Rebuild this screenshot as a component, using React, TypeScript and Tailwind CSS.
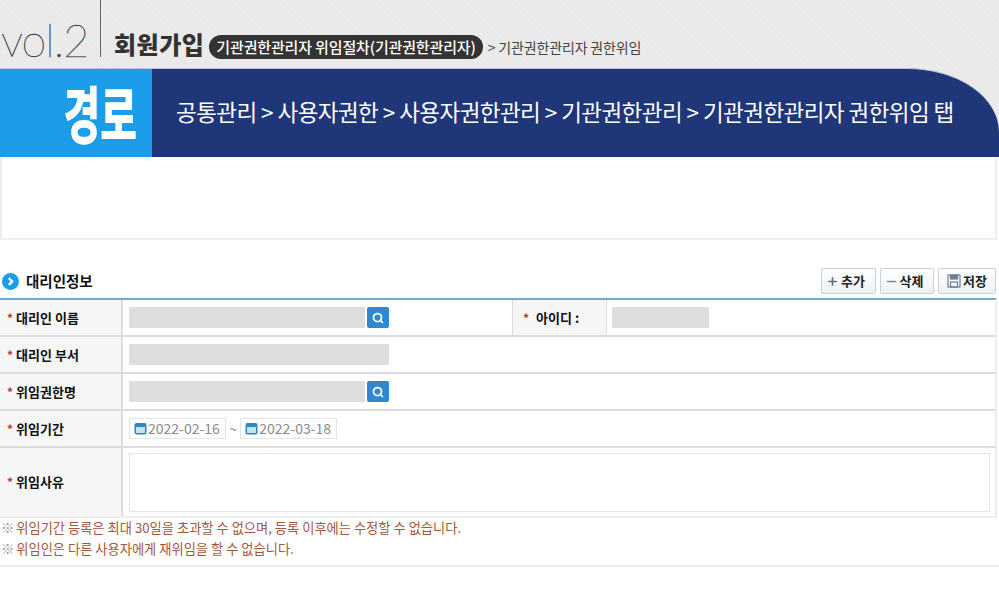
import { type FC, type ReactNode } from "react";
import { Plus, Minus, Search } from "lucide-react";

const Star = () => <span className="mr-[3px] text-[12px] leading-none text-[#b5393b]">*</span>;

const Label: FC<{ text: string; className?: string }> = ({ text, className }) => (
  <div className={`flex w-[123px] shrink-0 items-center border-r-2 border-[#dcdcdc] bg-[#f6f6f6] pl-[7px] text-[13px] font-bold text-[#111] ${className ?? ""}`}>
    <Star />
    {text}
  </div>
);

const GrayField: FC<{ className: string }> = ({ className }) => <div className={`h-[21px] bg-[#dedede] ${className}`} />;

const SearchButton = () => (
  <button className="ml-[2px] flex h-[21px] w-[22px] items-center justify-center rounded-[2px] bg-[#2f87d1]">
    <Search size={12} strokeWidth={3.5} className="text-white" />
  </button>
);

const Row: FC<{ children: ReactNode; className?: string }> = ({ children, className }) => (
  <div className={`flex border-b-2 border-[#dcdcdc] ${className ?? "h-[37px]"}`}>{children}</div>
);

const ActionButton: FC<{ icon: ReactNode; text: string; className: string }> = ({ icon, text, className }) => (
  <button className={`flex h-[26px] items-center justify-center gap-[2px] rounded-[2px] border border-[#c9d0d8] bg-gradient-to-b from-white to-[#eef1f4] text-[13px] font-bold text-[#222] ${className}`}>
    {icon}
    {text}
  </button>
);

const DateBox: FC<{ value: string }> = ({ value }) => (
  <div className="flex h-[21px] w-[97px] items-center border border-[#e4e4e4] pl-[4px] text-[14px] text-[#8a8a8a]">
    <svg width="13" height="13" viewBox="0 0 13 13" className="mr-[1px] shrink-0">
      <rect x="0.5" y="1" width="12" height="11.5" rx="2" fill="#2f87c9" />
      <rect x="2" y="5" width="9" height="6" fill="#c9dff0" />
    </svg>
    {value}
  </div>
);

const FloppyIcon = () => (
  <svg width="14" height="14" viewBox="0 0 14 14" fill="none" stroke="#6b7f96" strokeWidth="1.2">
    <rect x="1" y="1" width="12" height="12" />
    <rect x="3.5" y="1" width="7" height="4" fill="#6b7f96" />
    <rect x="3.5" y="8" width="7" height="5" />
  </svg>
);

const App = () => {
  return (
    <div className="h-[598px] w-[999px] overflow-hidden bg-white font-['Noto_Sans_CJK_KR','Noto_Sans',sans-serif]">
      <div className="bg-[repeating-linear-gradient(45deg,#e9e9e9_0px,#e9e9e9_2px,#ebebeb_2px,#ebebeb_4px)]">
        <div className="flex h-[68px] items-end">
          <span className="ml-[1px] w-[88px] font-['Lato',sans-serif] text-[45px] font-thin leading-[56px] tracking-[-1px] text-[#444] [-webkit-text-stroke:0.4px_#444]">vol.2</span>
          <div className="mb-[11px] ml-[11px] h-[57px] w-px bg-[#666]" />
          <span className="mb-[2px] ml-[13px] text-[24px] font-black leading-[44px] tracking-[0.5px] text-[#333]">회원가입</span>
          <span className="mb-[9px] ml-[5px] flex h-[24px] items-center rounded-full bg-[#333] px-[7px] text-[15px] font-medium tracking-[-0.15px] text-white">기관권한관리자 위임절차(기관권한관리자)</span>
          <span className="mb-[9px] ml-[5px] flex h-[24px] items-center text-[14px] tracking-[-0.15px] text-[#444]">&gt; 기관권한관리자 권한위임</span>
        </div>
        <div className="flex h-[89px] overflow-hidden rounded-tr-[92px_64px] border-t border-[#b9c3dd] bg-[#1f3679]">
          <div className="flex w-[152px] shrink-0 items-center justify-end bg-[#1b9dea] pr-[15px]">
            <span className="scale-y-[1.55] text-[40px] font-black leading-none text-white">경로</span>
          </div>
          <div className="flex items-center pb-[2px] pl-[24px] text-[22.5px] tracking-[-0.55px] text-white">공통관리 &gt; 사용자권한 &gt; 사용자권한관리 &gt; 기관권한관리 &gt; 기관권한관리자 권한위임 탭</div>
        </div>
      </div>

      <div className="mr-[2px] h-[83px] border-x-2 border-b-2 border-[#eeeeee]" />

      <div className="flex h-[58px] items-center justify-between pt-[24px]">
        <div className="flex items-center pl-[2px]">
          <span className="flex h-[17px] w-[17px] items-center justify-center rounded-full bg-[#1b9dea]">
            <svg width="9" height="9" viewBox="0 0 8 8" fill="none" stroke="white" strokeWidth="2">
              <path d="M2.5 1 L5.5 4 L2.5 7" />
            </svg>
          </span>
          <span className="ml-[7px] text-[14.5px] font-bold text-[#111]">대리인정보</span>
        </div>
        <div className="flex gap-[4px] pr-[3px]">
          <ActionButton className="w-[55px] pr-[6px]" text="추가" icon={<Plus size={13} strokeWidth={3} className="text-[#5a7390]" />} />
          <ActionButton className="w-[54px] pr-[6px]" text="삭제" icon={<Minus size={13} strokeWidth={3} className="text-[#7b8a9a]" />} />
          <ActionButton className="w-[58px]" text="저장" icon={<FloppyIcon />} />
        </div>
      </div>

      <div className="mr-[2px] border-r-2 border-t-2 border-r-[#eeeeee] border-t-[#6fa9d8]">
        <Row>
          <Label text="대리인 이름" />
          <div className="flex w-[389px] shrink-0 items-center pl-[6px]">
            <GrayField className="w-[236px]" />
            <SearchButton />
          </div>
          <div className="flex w-[95px] shrink-0 items-center border-x border-[#dcdcdc] bg-[#f6f6f6] pl-[10px] text-[13px] font-bold text-[#111]">
            <Star />
            <span className="ml-[4px]">아이디 :</span>
          </div>
          <div className="flex items-center pl-[5px]">
            <GrayField className="w-[97px]" />
          </div>
        </Row>
        <Row>
          <Label text="대리인 부서" />
          <div className="flex items-center pl-[6px]">
            <GrayField className="w-[260px]" />
          </div>
        </Row>
        <Row>
          <Label text="위임권한명" />
          <div className="flex items-center pl-[6px]">
            <GrayField className="w-[236px]" />
            <SearchButton />
          </div>
        </Row>
        <Row>
          <Label text="위임기간" />
          <div className="flex items-center pl-[6px]">
            <DateBox value="2022-02-16" />
            <span className="mx-[3.5px] text-[13px] text-[#888]">~</span>
            <DateBox value="2022-03-18" />
          </div>
        </Row>
        <Row className="h-[70px] border-b-[#eeeeee]">
          <Label text="위임사유" />
          <div className="flex flex-1 items-center pl-[6px] pr-[5px]">
            <div className="h-[59px] flex-1 border border-[#e4e4e4]" />
          </div>
        </Row>
      </div>

      <div className="-mt-[1px] border-b-2 border-[#eeeeee] pb-[6px] pl-[1px] text-[13.25px] leading-[21px] text-[#a5573c]">
        <p><span className="mr-[2px] text-[#999]">※</span>위임기간 등록은 최대 30일을 초과할 수 없으며, 등록 이후에는 수정할 수 없습니다.</p>
        <p><span className="mr-[2px] text-[#999]">※</span>위임인은 다른 사용자에게 재위임을 할 수 없습니다.</p>
      </div>
    </div>
  );
};

export default App;
